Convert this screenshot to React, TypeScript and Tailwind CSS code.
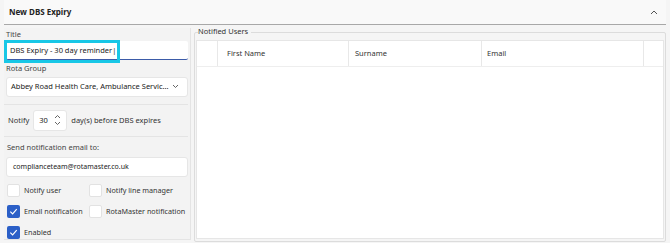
import React from 'react';

const font = { fontFamily: '"Noto Sans", "Open Sans", sans-serif' };

const Check: React.FC<{ checked?: boolean; label: string }> = ({ checked, label }) => (
  <label className="flex items-center gap-[4px] h-[14px] whitespace-nowrap">
    {checked ? (
      <span className="w-[13px] h-[13px] rounded-[2px] bg-[#2b5fc7] flex items-center justify-center">
        <svg width="9" height="9" viewBox="0 0 10 10">
          <path d="M1.5 5.2 L4 7.6 L8.6 2.4" stroke="#fff" strokeWidth="1.3" fill="none" />
        </svg>
      </span>
    ) : (
      <span className="w-[13px] h-[13px] rounded-[2px] bg-white border border-[#e2e2e2]" />
    )}
    <span className="text-[7.2px] text-[#333]">{label}</span>
  </label>
);

export default function App() {
  return (
    <div className="w-[670px] h-[243px] bg-[#f5f5f5] text-[#222] overflow-hidden" style={font}>
      <div className="h-[25px] flex items-center justify-between pl-[5px] pr-[8px] border-b border-[#a8a8a8] mx-[4px] bg-[#f9f9f9]">
        <span className="text-[8px] font-bold text-[#222]">New DBS Expiry</span>
        <svg width="8" height="6" viewBox="0 0 8 6">
          <path d="M1 5 L4 2 L7 5" stroke="#555" strokeWidth="1" fill="none" />
        </svg>
      </div>
      <div className="flex px-[4px] pt-[3px] gap-[3px]">
        {/* left form */}
        <div className="w-[187px] h-[212px] flex flex-col border-r border-b border-[#e4e4e4] bg-[#f3f3f3] pr-[2px]">
          <span className="text-[7.5px] text-[#444] pl-[2px] leading-[9px] mt-[2px]">Title</span>
          <div className="relative mt-[2px] ml-[2px] h-[21px] bg-white border-b border-[#3b5ba8] rounded-[2px] flex items-center pl-[4px]">
            <span className="text-[7.5px] text-[#222]">DBS Expiry - 30 day reminder|</span>
            <div className="absolute left-[-2px] top-[-1px] w-[116px] h-[23px] border-[3px] border-[#18c7e6]" />
          </div>
          <span className="text-[7.5px] text-[#444] pl-[2px] leading-[9px] mt-[4px]">Rota Group</span>
          <div className="mt-[4px] ml-[2px] h-[21px] bg-white border border-[#e6e6e6] rounded-[3px] flex items-center justify-between pl-[4px] pr-[8px]">
            <span className="text-[7.5px] text-[#222]">Abbey Road Health Care, Ambulance Servic...</span>
            <svg width="7" height="5" viewBox="0 0 7 5">
              <path d="M1 1 L3.5 3.5 L6 1" stroke="#555" strokeWidth="0.9" fill="none" />
            </svg>
          </div>
          <div className="mt-[7px] border-t border-[#e4e4e4]" />
          <div className="flex items-center h-[34px] pl-[4px]">
            <span className="text-[7.5px] text-[#333]">Notify</span>
            <div className="ml-[4px] w-[34px] h-[21px] bg-white border border-[#e6e6e6] rounded-[3px] flex items-center justify-between pl-[5px] pr-[5px]">
              <span className="text-[7.5px] text-[#222]">30</span>
              <svg width="7" height="12" viewBox="0 0 7 12">
                <path d="M1 4 L3.5 1.5 L6 4" stroke="#555" strokeWidth="0.9" fill="none" />
                <path d="M1 8 L3.5 10.5 L6 8" stroke="#555" strokeWidth="0.9" fill="none" />
              </svg>
            </div>
            <span className="ml-[4px] text-[7.5px] text-[#333]">day(s) before DBS expires</span>
          </div>
          <div className="border-t border-[#e4e4e4]" />
          <span className="text-[7.5px] text-[#444] pl-[3px] leading-[9px] mt-[6px]">Send notification email to:</span>
          <div className="mt-[5px] ml-[2px] h-[22px] bg-white border border-[#e6e6e6] rounded-[3px] flex items-center pl-[6px]">
            <span className="text-[7px] text-[#222]">complianceteam@rotamaster.co.uk</span>
          </div>
          <div className="grid grid-cols-[82px_1fr] gap-y-[7px] pl-[3px] mt-[6px]">
            <Check label="Notify user" />
            <Check label="Notify line manager" />
            <Check checked label="Email notification" />
            <Check label="RotaMaster notification" />
            <Check checked label="Enabled" />
          </div>
        </div>
        {/* right group */}
        <div className="flex-1 relative mt-[4px] h-[210px] border border-[#dcdcdc] rounded-[2px] px-[1px] pt-[7px] pb-[2px]">
          <span className="absolute left-[3px] top-[-6px] bg-[#f5f5f5] pr-[3px] text-[7.5px] text-[#333] leading-[9px]">Notified Users</span>
          <div className="h-full bg-white border border-[#e6e6e6] flex flex-col">
            <div className="h-[26px] flex border-b border-[#eeeeee] text-[7.5px] text-[#333]">
              <div className="w-[21px] border-r border-[#e8e8e8]" />
              <div className="w-[131px] border-r border-[#e8e8e8] flex items-center pl-[9px]">First Name</div>
              <div className="w-[133px] border-r border-[#e8e8e8] flex items-center pl-[6px]">Surname</div>
              <div className="w-[162px] border-r border-[#e8e8e8] flex items-center pl-[5px]">Email</div>
              <div className="flex-1" />
            </div>
          </div>
        </div>
      </div>
    </div>
  );
}
